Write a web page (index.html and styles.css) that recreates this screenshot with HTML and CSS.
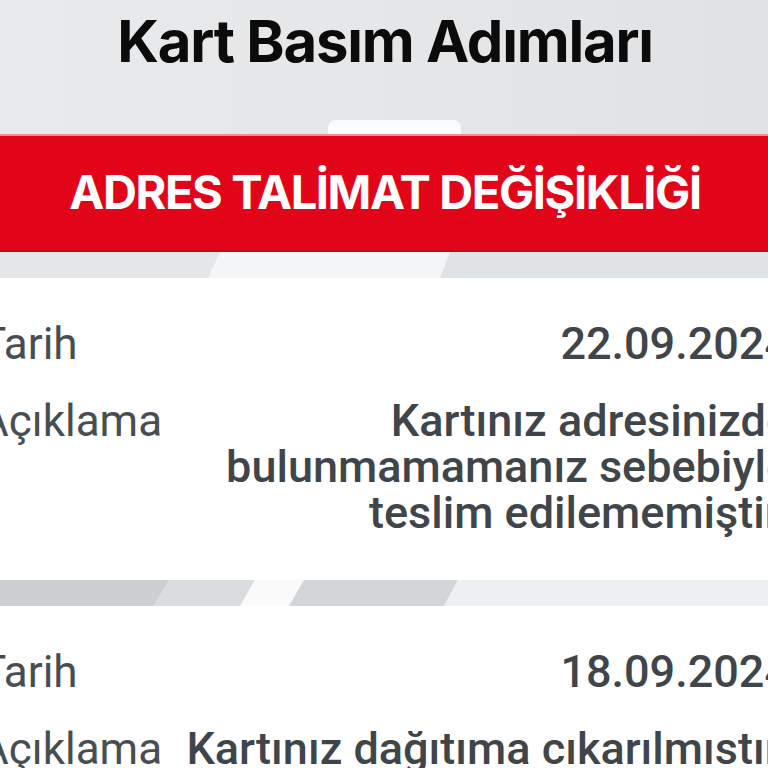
FILE: index.html
```html
<!DOCTYPE html>
<html lang="tr">
<head>
<meta charset="utf-8">
<title>Kart Basım Adımları</title>
<link rel="stylesheet" href="styles.css">
</head>
<body>
<div class="page">
  <header class="header">
    <h1 class="title">Kart Basım Adımları</h1>
    <div class="peek"></div>
  </header>
  <div class="banner"><span class="banner-text">ADRES TALİMAT DEĞİŞİKLİĞİ</span></div>
  <svg class="strip" viewBox="0 0 810 26" preserveAspectRatio="none" aria-hidden="true">
    <rect x="0" y="0" width="810" height="26" fill="#e0e3e5"/>
    <rect x="0" y="0" width="240" height="26" fill="#e4e6e8"/>
    <polygon points="240,0 470,0 460,26 228,26" fill="#f4f5f6"/>
  </svg>
  <section class="card">
    <div class="row">
      <span class="label">Tarih</span>
      <span class="value">22.09.2024</span>
    </div>
    <div class="row">
      <span class="label">Açıklama</span>
      <span class="value">Kartınız adresinizde bulunmamamanız sebebiyle teslim edilememiştir.</span>
    </div>
  </section>
  <svg class="strip" viewBox="0 0 810 26" preserveAspectRatio="none" aria-hidden="true">
    <rect x="0" y="0" width="810" height="26" fill="#f1f2f3"/>
    <polygon points="0,0 189,0 174,26 0,26" fill="#cdd0d2"/>
    <polygon points="189,0 275,0 260,26 174,26" fill="#dadddf"/>
    <polygon points="275,0 324,0 309,26 260,26" fill="#fafafa"/>
    <polygon points="324,0 478,0 464,26 309,26" fill="#d3d6d8"/>
    <polygon points="478,0 810,0 810,26 464,26" fill="#eeeff0"/>
  </svg>
  <section class="card">
    <div class="row">
      <span class="label">Tarih</span>
      <span class="value">18.09.2024</span>
    </div>
    <div class="row">
      <span class="label">Açıklama</span>
      <span class="value">Kartınız dağıtıma cıkarılmıstır.</span>
    </div>
  </section>
</div>
</body>
</html>
```
FILE: styles.css
```css
html, body {
  margin: 0;
  padding: 0;
  background: #ffffff;
  overflow: hidden;
}
body {
  width: 768px;
  height: 768px;
  font-family: "Inter", "Noto Sans", sans-serif;
}
.page {
  width: 810px;
  margin-left: -20px;
}
.header {
  height: 134px;
  box-sizing: border-box;
  padding-top: 12px;
  display: flex;
  flex-direction: column;
  background: linear-gradient(90deg, #e9eaeb 0%, #e6e7e9 45%, #dfe2e4 100%);
}
.title {
  margin: 0;
  text-align: center;
  font-size: 58px;
  line-height: 58px;
  font-weight: 700;
  color: #0b0b0b;
  letter-spacing: -1.2px;
}
.peek {
  margin-top: auto;
  margin-left: 348px;
  width: 133px;
  height: 14px;
  border-radius: 8px 8px 0 0;
  background: linear-gradient(180deg, #f7f8f9, #ffffff);
}
.banner {
  height: 118px;
  box-sizing: border-box;
  padding-bottom: 4px;
  display: flex;
  align-items: center;
  justify-content: center;
  background: #e2051a;
  border-top: 2px solid #ef8c94;
  border-bottom: 2px solid #b8101c;
}
.banner-text {
  color: #ffffff;
  font-size: 47px;
  font-weight: 700;
  letter-spacing: -1.4px;
}
.strip {
  display: block;
  width: 810px;
  height: 26px;
}
.card {
  padding: 43px 0 44px;
  display: flex;
  flex-direction: column;
  gap: 31px;
  background: #ffffff;
  font-family: "Roboto", "Inter", sans-serif;
}
.row {
  display: flex;
  justify-content: space-between;
  align-items: flex-start;
  gap: 16px;
}
.label {
  flex: none;
  font-size: 44px;
  line-height: 46px;
  font-weight: 400;
  color: #484d52;
}
.value {
  flex: 1;
  text-align: right;
  font-size: 45px;
  line-height: 46px;
  font-weight: 500;
  color: #40454a;
}
```
